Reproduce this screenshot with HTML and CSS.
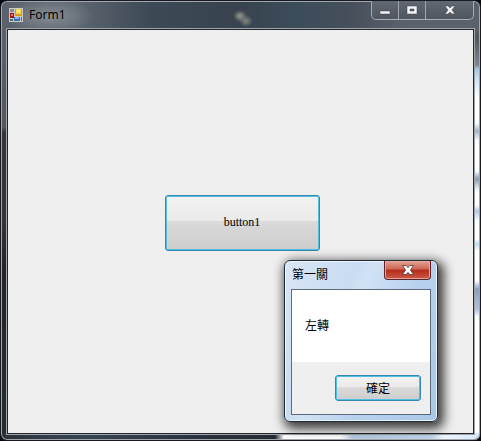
FILE: index.html
```html
<!DOCTYPE html>
<html lang="zh-Hant">
<head>
<meta charset="utf-8">
<title>Form1</title>
<link rel="stylesheet" href="styles.css">
</head>
<body>
<main class="window">
  <header class="titlebar">
    <svg class="app-icon" viewBox="0 0 14 14" aria-hidden="true">
      <rect width="14" height="14" fill="#c9cbc8"/>
      <rect x="1" y="1" width="4" height="3" fill="#888d90"/>
      <rect x="6" y="1" width="7" height="7" fill="#d99c18"/>
      <rect x="7" y="1" width="5" height="5" fill="#fbd64c"/>
      <rect x="8" y="2" width="3" height="2" fill="#fff0a0"/>
      <rect x="1" y="5" width="4" height="5" fill="#a51216"/>
      <rect x="2" y="6" width="2" height="2" fill="#ee7068"/>
      <rect x="1" y="11" width="3" height="2" fill="#537263"/>
      <rect x="5" y="9" width="6" height="4" fill="#3e69b8"/>
      <rect x="6" y="9" width="4" height="2" fill="#8bb5f2"/>
      <rect x="12" y="9" width="1" height="4" fill="#5b6c7e"/>
    </svg>
    <h1 class="title">Form1</h1>
    <div class="controls">
      <button class="control" type="button" aria-label="Minimize">
        <svg viewBox="0 0 12 10"><rect x="1" y="6" width="10" height="3" fill="#f4f4f6" stroke="#3e4249" stroke-width=".5"/></svg>
      </button>
      <button class="control" type="button" aria-label="Maximize">
        <svg viewBox="0 0 12 10"><path d="M1 1h10v8H1zM4 4v2h4V4z" fill="#f4f4f6" fill-rule="evenodd" stroke="#3e4249" stroke-width=".5"/></svg>
      </button>
      <button class="control control-wide" type="button" aria-label="Close">
        <svg viewBox="0 0 12 10"><path d="M1 1h3l2 2 2-2h3L8 5l3 4H8L6 7 4 9H1l3-4z" fill="#f4f4f6" stroke="#3e4249" stroke-width=".5"/></svg>
      </button>
    </div>
  </header>
  <section class="client">
    <button class="push form-button" type="button">button1</button>
  </section>
</main>

<div class="dialog" role="dialog" aria-labelledby="dialog-title">
  <header class="dialog-bar">
    <h2 class="dialog-title" id="dialog-title">第一關</h2>
    <button class="dialog-close" type="button" aria-label="Close">
      <svg viewBox="0 0 12 10"><path d="M.5.5h3.7L6 2.6 7.800.5h3.700L8.500 5l3 4.500H7.800L6 7.400 4.200 9.500H.5l3-4.500z" fill="#fff" stroke="#5a3432" stroke-width=".8"/></svg>
    </button>
  </header>
  <div class="dialog-body">
    <p class="message">左轉</p>
    <footer class="actions">
      <button class="push ok" type="button">確定</button>
    </footer>
  </div>
</div>
</body>
</html>
```
FILE: styles.css
```css
* { box-sizing: border-box; }

body {
  margin: 0;
  background: #08090c;
  font-family: "Noto Sans", "Noto Sans CJK TC", sans-serif;
  font-size: 12px;
  color: #000;
}

button { font: inherit; color: inherit; padding: 0; }
svg { display: block; }

.window {
  display: flex;
  flex-direction: column;
  min-height: 100vh;
  padding: 0 6px 6px;
  border: 1px solid #171a22;
  border-radius: 7px;
  box-shadow: inset 0 0 0 1px #a0a6ac;
  background:
    linear-gradient(90deg, #2b3039, #35424e 60px, #354550 90px, #2c3440 180px, #252b34 274px, #fff 283px, #fff 340px, #b8cce2 352px, #c4d8ee 430px, #eef6fe 442px, #d4e8fc) bottom / 100% 7px no-repeat,
    linear-gradient(#5b616b 28px, #50545b 36px, #7d8791 64px, #a9c7e0 68px, #dceaf8 82px, #fff 98px, #fff 122px, #a6b4c4 130px, #fff 140px, #fff 170px, #8a9aae 178px, #fff 190px, #fff 204px, #b4c9e4 210px, #fff 220px, #fff 238px, #c0e0f2 243px, #fff 250px, #fff 280px, #8c9fbc 288px, #b0c0d8 308px, #fff 316px, #fff) right / 8px 100% no-repeat,
    linear-gradient(#5b616b 28px, #56565e 126px, #353539 132px, #343438 220px, #232327 270px, #292b33) left / 8px 100% no-repeat,
    radial-gradient(ellipse 7px 6px at 239px 15px, #999891, transparent),
    radial-gradient(ellipse 7px 6px at 245px 20px, #858680, transparent),
    radial-gradient(ellipse 45px 18px at 48px 15px, #858c91, transparent),
    linear-gradient(90deg, #5b616b, #5f6872 70px, #3d4956 150px, #38434f 235px, #3c4d5a 300px, #464f5b 350px, #5a616b 400px, #5a616b);
}

.titlebar {
  display: flex;
  align-items: flex-start;
  height: 28px;
}

.app-icon { width: 14px; height: 14px; margin: 7px 0 0 2px; }

.title {
  flex: 1;
  margin: 5px 0 0 6px;
  font-size: 12px;
  font-weight: 400;
  line-height: 18px;
}

.controls {
  display: flex;
  height: 19px;
  border: 1px solid #a7acb2;
  border-top: 0;
  border-radius: 0 0 5px 5px;
  background: linear-gradient(#626871, #50565f);
  overflow: hidden;
}

.control {
  display: grid;
  place-items: center;
  width: 27px;
  border: 0;
  border-right: 1px solid #a0a5ab;
  background: none;
}

.control-wide { width: 47px; border-right: 0; }
.control svg { width: 12px; height: 10px; }

.client {
  flex: 1;
  display: grid;
  place-items: center;
  padding: 0 0 18px 3px;
  border: 1px solid #23262c;
  outline: 1px solid #a0a5a9;
  background: #efefef;
}

.push {
  border: 1px solid #3589ae;
  border-radius: 3px;
  box-shadow: inset 0 0 0 1px #50bfe4;
  background: linear-gradient(#f2f2f2, #eaeaea 46%, #dadada 47%, #cdcdcd);
}

.form-button {
  width: 155px;
  height: 56px;
  font-family: "Liberation Serif", serif;
}

.dialog {
  position: absolute;
  right: 43px;
  bottom: 19px;
  width: 154px;
  padding: 0 6px 6px;
  border: 1px solid #202b39;
  border-radius: 6px;
  background: linear-gradient(115deg, #d9e6f6, #c9dcf2 33%, #d2e2f5 40%, #b8d1ef 62%, #a9c6e9);
  box-shadow: inset 0 0 0 1px #edf5fd, 3px 4px 11px 3px rgba(0, 0, 0, .75);
}

.dialog-bar {
  display: flex;
  justify-content: space-between;
  height: 28px;
}

.dialog-title {
  margin: 5px 0 0 1px;
  font-size: 12px;
  font-weight: 400;
  line-height: 18px;
}

.dialog-close {
  display: grid;
  place-items: center;
  width: 47px;
  height: 19px;
  border: 1px solid #57252a;
  border-top: 0;
  border-radius: 0 0 4px 4px;
  box-shadow: inset 0 0 0 1px #e5a79d;
  background: linear-gradient(#e2a394, #cf6554 45%, #b42d1c 50%, #cb5a44);
}

.dialog-close svg { width: 12px; height: 10px; }

.dialog-body {
  border: 1px solid #5d6b7c;
  background: #fff;
}

.message {
  margin: 0;
  padding: 27px 13px;
  line-height: 18px;
}

.actions {
  display: flex;
  justify-content: flex-end;
  padding: 13px 9px;
  background: #efefef;
}

.ok { width: 86px; height: 26px; }
```
